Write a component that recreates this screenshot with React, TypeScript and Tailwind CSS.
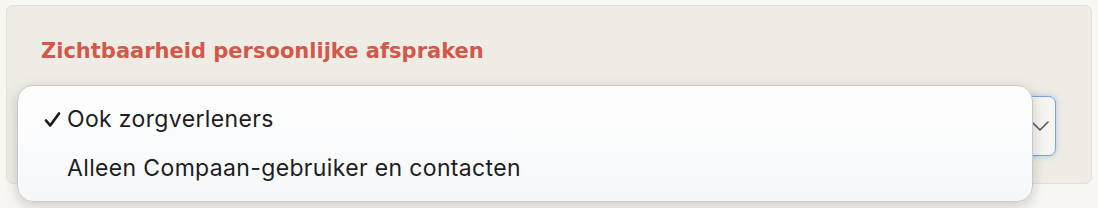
// Zichtbaarheid-instelling met geopende (native-achtige) keuzelijst
const options = [
  { label: "Ook zorgverleners", checked: true },
  { label: "Alleen Compaan-gebruiker en contacten", checked: false },
];

export default function App() {
  return (
    <div className="h-[208px] w-[1098px] bg-[#f9f7f3] px-[6px] pt-[5px] font-['Inter','Liberation_Sans',sans-serif]">
      <div className="relative h-[179px] rounded-[7px] border border-[#e4e0d8] bg-[#efece5] pl-[24px] pr-[35px] pt-[33px]">
        <h2 className="pl-[10px] text-[21px] leading-[24px] font-bold text-[#d2594a] font-['DejaVu_Sans','Open_Sans',sans-serif]">
          Zichtbaarheid persoonlijke afspraken
        </h2>

        {/* select-veld */}
        <div className="mt-[33px] flex h-[60px] items-center justify-end rounded-[7px] border border-[#6fa5ea] bg-[#f6f5f2] pr-[6px] shadow-[0_0_6px_rgba(90,150,230,0.45)]">
          <svg width="18" height="10" viewBox="0 0 18 10" fill="none">
            <path d="M1 1 L9 9 L17 1" stroke="#555" strokeWidth="1.6" strokeLinecap="round" strokeLinejoin="round" />
          </svg>
        </div>

        {/* geopend menu */}
        <div className="absolute left-[10px] top-[79px] w-[1016px] overflow-hidden rounded-[16px] border border-[#c9c9c9] bg-gradient-to-b from-[#fdfdfd] via-[#fbfcfd] to-[#f6f7f8] pt-[9px] pb-[8px] shadow-[0_4px_14px_rgba(0,0,0,0.18)]">
          {options.map((o) => (
            <div
              key={o.label}
              className="flex h-[49px] items-center text-[23px] tracking-[0.35px] text-[#1d1d1f]"
            >
              <span className="flex w-[49px] justify-end pr-[6px]">
                {o.checked && (
                  <svg width="17" height="17" viewBox="0 0 17 17" fill="none">
                    <path
                      d="M2 9.5 L6.2 14.5 L15 2.5"
                      stroke="#1a1a1a"
                      strokeWidth="2.7"
                      strokeLinecap="round"
                      strokeLinejoin="round"
                    />
                  </svg>
                )}
              </span>
              <span>{o.label}</span>
            </div>
          ))}
        </div>
      </div>
    </div>
  );
}
